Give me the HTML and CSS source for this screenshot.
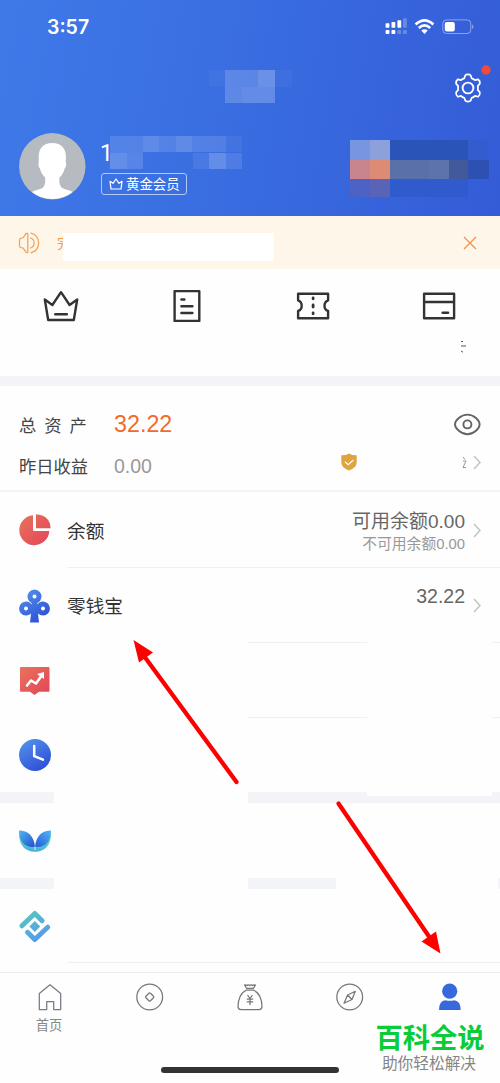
FILE: index.html
```html
<!DOCTYPE html>
<html lang="zh-CN">
<head>
<meta charset="utf-8">
<title>我的</title>
<link rel="stylesheet" href="styles.css">
</head>
<body>
<div class="phone">
  <header class="header">
    <div class="status">
      <span class="time">3:57</span>
      <svg class="status-icons" width="92" height="20" viewBox="0 0 92 20" fill="#fff">
        <rect x="2.600" y="7.300" width="3.800" height="4.500" rx=".7"/><rect x="8.500" y="6" width="3.800" height="5.800" rx=".7"/><rect x="14.400" y="4.300" width="3.800" height="7.500" rx=".7"/><rect x="20" y="2.300" width="3.800" height="9.500" rx=".7" opacity=".25"/>
        <rect x="2.600" y="14" width="3.800" height="4" rx=".8"/><rect x="8.500" y="14" width="3.800" height="4" rx=".8"/><rect x="14.400" y="14" width="3.800" height="4" rx=".8" opacity=".25"/><rect x="20" y="14" width="3.800" height="4" rx=".8" opacity=".25"/>
        <g transform="translate(0 -.8)"><g fill="none" stroke="#fff" stroke-width="2.700"><path d="M32.600 9.300Q41.500 .9 50.400 9.300"/><path d="M35.800 12.700Q41.500 7.600 47.200 12.700"/></g><path d="M38.300 15.300Q41.500 12.900 44.700 15.300L41.500 18.900Z"/></g>
        <g transform="translate(0 -.8)"><rect x="59.800" y="4.700" width="28" height="13.600" rx="3.700" fill="none" stroke="#fff" opacity=".42"/><rect x="61.800" y="6.700" width="10" height="9.700" rx="2"/><path d="M89.200 9q2.400 2.500 0 5z" opacity=".5"/></g>
      </svg>
    </div>
    <div class="titlebar">
      <svg class="title-mosaic" width="83" height="34" viewBox="0 0 83 34" fill="#fff" shape-rendering="crispEdges"><path d="M0 0h16v16H0z" opacity=".04"/><path d="M16 0h17v17H16z" opacity=".18"/><path d="M33 0h16v17H33z" opacity=".18"/><path d="M49 0h17v17H49z" opacity=".25"/><path d="M66 0h17v17H66z" opacity=".03"/><path d="M16 17h17v16H16z" opacity=".19"/><path d="M33 17h33v16H33z" opacity=".22"/></svg>
      <svg class="gear" width="40" height="40" viewBox="0 0 40 40"><g fill="none" stroke="#fff" stroke-width="1.900" stroke-linejoin="round"><path transform="translate(1.500 1.500) scale(.915 .93)" d="M15 7.500C16 6 20 6 21 7.500L22 10.500Q24.200 11 25.700 12.600L29 11.600C30.600 12.700 31.200 14.400 31 16.300L28.700 19Q29.200 21 28.700 23L31 25.700C31.200 27.600 30.600 29.300 29 30.400L25.700 29.400Q24.200 31 22 31.500L21 34.500C20 36 16 36 15 34.500L14 31.500Q11.800 31 10.300 29.400L7 30.400C5.400 29.300 4.800 27.600 5 25.700L7.300 23Q6.800 21 7.300 19L5 16.300C4.800 14.400 5.400 12.700 7 11.600L10.300 12.600Q11.800 11 14 10.500Z"/><circle cx="18" cy="21" r="5.400"/></g><circle cx="36" cy="3" r="4.700" fill="#ef4a3c"/></svg>
    </div>
    <div class="profile">
      <svg class="avatar" width="67" height="67" viewBox="0 0 67 67"><circle cx="33.300" cy="33.300" r="33.200" fill="#b6bbc1"/><path d="M33.300 10C24 10 19.500 16 19.700 24c0 1.800.2 4-.1 6-.6 1.500.1 4.200 1.200 5.200 1 3.700 2.800 7 5.400 9.300.3 4.700-.2 8.800-3.200 10.800-3 2-7 1.500-10 3.800a33 33 0 0 0 40.600 0c-3-2.300-7-1.800-10-3.800-3-2-3.500-6.100-3.200-10.800 2.600-2.300 4.400-5.600 5.400-9.300 1.100-1 1.800-3.700 1.200-5.200-.3-2-.1-4.200-.1-6C47.100 16 42.600 10 33.300 10Z" fill="#fff"/></svg>
      <div class="identity">
        <div class="name"><span>1</span><svg width="133" height="33" viewBox="0 0 133 33" fill="#fff" shape-rendering="crispEdges"><path d="M0 0h33v17H0z" opacity=".12"/><path d="M33 0h16v16H33z" opacity=".18"/><path d="M49 0h17v16H49z" opacity=".13"/><path d="M66 0h16v16H66z" opacity=".19"/><path d="M82 0h34v16H82z" opacity=".13"/><path d="M116 0h16v16h-16z" opacity=".05"/><path d="M0 17h17v16H0z" opacity=".2"/><path d="M17 17h16v16H17z" opacity=".14"/><path d="M83 17h16v16H83z" opacity=".08"/><path d="M99 17h17v16H99z" opacity=".22"/><path d="M116 17h16v16h-16z" opacity=".11"/></svg></div>
        <div class="badge"><svg width="14" height="12" viewBox="0 0 14 12" fill="none" stroke="#fff" stroke-width="1.200" stroke-linejoin="round" stroke-linecap="round"><path d="M1 3.300l3 2L7 1l3 4.300 3-2-1 7.700H2z"/></svg><span>黄金会员</span></div>
      </div>
      <svg class="card-mosaic" width="139" height="57" viewBox="0 0 139 57" shape-rendering="crispEdges"><path fill="#7895e2" d="M0 0h20v20H0z"/><path fill="#8ca1dc" d="M20 0h20v20H20z"/><path fill="#2b54b9" d="M40 0h78v20H40z"/><path fill="#335dcf" d="M118 0h20v20h-20z"/><path fill="#c8858d" d="M0 20h20v19H0z"/><path fill="#dd8b75" d="M20 20h20v19H20z"/><path fill="#5971a8" d="M40 20h39v19H40z"/><path fill="#5d74ab" d="M79 20h20v19H79z"/><path fill="#42599b" d="M99 20h19v19H99z"/><path fill="#2c51b2" d="M118 20h21v19h-21z"/><path fill="#4c62c5" d="M0 39h20v18H0z"/><path fill="#5963b8" d="M20 39h20v18H20z"/><path fill="#305bcc" d="M40 39h78v18H40z"/></svg>
    </div>
  </header>

  <div class="notice">
    <svg width="22" height="22" viewBox="0 0 22 22" fill="none" stroke="#f0a45d" stroke-width="1.300" stroke-linecap="round" stroke-linejoin="round"><path d="M9.800 20V2.300Q9.600 1 8.200 1.400L5.400 5.400Q4.800 6.200 3.300 6.200Q1.500 6.300 1.500 8.300v5.200q0 2 1.800 2.100 1.500 0 2.100.8l2.800 4q1.400.8 1.600-.4M12.500 6q3.600 1.200 3.600 5t-3.600 5M13 1.200q7.600 2.200 7.600 9.800T13 20.800"/></svg>
    <span class="notice-text">完</span>
    <span class="notice-cover"></span>
    <svg class="close" width="14" height="14" viewBox="0 0 14 14" stroke="#f0944c" stroke-width="1.300"><path d="M1 1l12 12M13 1L1 13"/></svg>
  </div>

  <nav class="quick">
    <svg width="38" height="36" viewBox="0 0 38 36"><path d="M2.800 12.500L10.400 18 19 5.200 27.600 18 35.200 12.500 31.800 33H6.200Z"/><path d="M13.300 27.300h11.500"/></svg>
    <svg width="38" height="36" viewBox="0 0 38 36"><path d="M6.600 4.100h24.700v29.800H6.600z"/><path d="M13.400 12.500h3M13.400 19.200h11M13.400 26h11"/></svg>
    <svg width="38" height="36" viewBox="0 0 38 36"><path d="M4.100 6.800h30v6.500C29.300 15 29.300 22.500 34.100 24v7.200h-30V24C8.900 22.500 8.900 15 4.100 13.300z"/><path d="M19.100 11v.8M19.100 18v2M19.100 26v.8" stroke-width="2.800"/></svg>
    <svg width="38" height="36" viewBox="0 0 38 36"><path d="M4.100 6.800h30v24.500h-30zM4.100 15h30"/><path d="M22.600 25.700h5.500"/></svg>
  </nav>
  <div class="quick-note"><svg width="7" height="14" viewBox="0 0 7 14" fill="none" stroke="#555"><path d="M1 1.500h2M1 6h5M1 11l2 1.200"/></svg></div>

  <div class="band band-top"></div>
  <section class="assets">
    <div class="asset-line total">
      <span class="label spaced">总资产</span><span class="amount">32.22</span>
      <svg class="eye" width="28" height="24" viewBox="0 0 28 24" fill="none" stroke="#646464" stroke-width="1.900"><path d="M2 12.400C2 8.500 8 2.600 14.500 2.600S26.600 8.500 26.600 12.400 21 22.200 14.500 22.200 2 16.300 2 12.400Z"/><circle cx="14.400" cy="12.400" r="4"/></svg>
    </div>
    <div class="asset-line income">
      <span class="label">昨日收益</span><span class="gain">0.00</span>
      <svg class="shield" width="16" height="18" viewBox="0 0 16 18"><path d="M8 .4Q10.500 2.300 15.700 2.300V9.500Q15.400 15 8 17.600.6 15 .3 9.500V2.300Q5.500 2.300 8 .4Z" fill="#dfa43d"/><path d="M4 8.700l3.200 3L12.300 7" fill="none" stroke="#fff" stroke-width="1.200"/></svg>
      <svg class="fragment" width="5" height="13" viewBox="0 0 5 13" fill="none" stroke="#999"><path d="M1 1l2 2.500M1 5h3L1 11.500h3"/></svg>
      <svg class="chevron" width="8" height="15" viewBox="0 0 8 15"><path d="M1 1l6 6.500-6 6.500"/></svg>
    </div>
  </section>

  <main class="list">
    <div class="row balance">
      <svg width="32" height="32" viewBox="0 0 32 32"><defs><linearGradient id="red" x2="1" y2="1"><stop stop-color="#e7745a"/><stop offset="1" stop-color="#e34459"/></linearGradient><linearGradient id="blue" x2=".6" y2="1"><stop stop-color="#5596ed"/><stop offset="1" stop-color="#2f52d7"/></linearGradient></defs><path fill="url(#red)" d="M14 1.200A15 15 0 1 0 30.300 17H15Q14 17 14 16ZM17 .2Q31 1.200 31.600 14.200H17Z"/></svg>
      <span class="row-title">余额</span>
      <div class="value"><span>可用余额0.00</span><small>不可用余额0.00</small></div>
      <svg class="chevron" width="8" height="15" viewBox="0 0 8 15"><path d="M1 1l6 6.500-6 6.500"/></svg>
    </div>
    <div class="row wallet">
      <svg width="32" height="34" viewBox="0 0 32 34"><path fill="url(#blue)" fill-rule="evenodd" d="M12 13.500A7 7 0 1 1 19 13.500Q18 14.500 18.200 15.500A7 7 0 1 1 19 24.500L20 33.500H11L12 24.500A7 7 0 1 1 12.800 15.500Q13 14.500 12 13.500ZM15.500 5.400a2 2 0 1 0 .01 0ZM7 17.500a2 2 0 1 0 .01 0ZM24 17.500a2 2 0 1 0 .01 0Z"/></svg>
      <span class="row-title">零钱宝</span>
      <div class="value single"><span>32.22</span></div>
      <svg class="chevron" width="8" height="15" viewBox="0 0 8 15"><path d="M1 1l6 6.500-6 6.500"/></svg>
    </div>
    <div class="row chart"><svg width="32" height="32" viewBox="0 0 32 32"><path fill="url(#red)" d="M2 2h27.500q1 0 1 1v22.700q0 1-1 1H20L15.500 30 11 26.700H2q-1 0-1-1V3q0-1 1-1z"/><path d="M8 20.500l4-5 5 3L23 10" fill="none" stroke="#fff" stroke-width="2.600" stroke-linecap="round" stroke-linejoin="round"/><path fill="#fff" d="M18 9l7-2v7z"/></svg></div>
    <div class="row clock"><svg width="32" height="32" viewBox="0 0 32 32"><circle cx="16" cy="16" r="16" fill="url(#blue)"/><path d="M15.200 7v10.200l8.800 3.500" fill="none" stroke="#fff" stroke-width="2.500" stroke-linecap="round" stroke-linejoin="round"/></svg></div>
    <div class="band"></div>
    <div class="row leaf"><svg width="32" height="22" viewBox="0 0 32 22"><defs><linearGradient id="leaf" x2="1" y2="1"><stop stop-color="#50b7f5"/><stop offset="1" stop-color="#204fcb"/></linearGradient><linearGradient id="leaf2" x1="1" x2="0" y2="1"><stop stop-color="#50b7f5"/><stop offset="1" stop-color="#2559d6"/></linearGradient><linearGradient id="cup" x2="0" y2="1"><stop stop-color="#76edaa"/><stop offset="1" stop-color="#47aae1"/></linearGradient></defs><path fill="url(#cup)" d="M0 4C0 15 6 21.800 16 21.800S32 15 32 4L16 17Z"/><path fill="url(#leaf)" d="M0 .5C9 .5 15 6 16 16.800 6 18 0 12 0 .5Z"/><path fill="url(#leaf2)" d="M32 .5C23 .5 17 6 16 16.800 26 18 32 12 32 .5Z"/><path fill="#cff6f4" d="M15.500 17h1v3h-1z"/></svg></div>
    <div class="band"></div>
    <div class="row diamond"><svg width="32" height="33" viewBox="0 0 32 33"><defs><linearGradient id="teal" gradientUnits="userSpaceOnUse" x1="6" y1="2" x2="22" y2="30"><stop stop-color="#5cc7bd"/><stop offset="1" stop-color="#539aed"/></linearGradient></defs><g fill="none" stroke="url(#teal)" stroke-width="5" stroke-linecap="round" stroke-linejoin="round"><path d="M2.900 15.800L15.800 3.500l7.300 7.200M28.700 17.200L15.800 29.500 8.500 22.300"/></g><path fill="url(#teal)" d="M15.800 11l5.400 5.500-5.400 5.500-5.400-5.500z"/></svg></div>
  </main>

  <footer class="tabs">
    <div class="tab"><svg width="28" height="28" viewBox="0 0 28 28"><path d="M3.300 10.500L14 1.800l10.700 8.700V26.500h-7v-8h-7v8H3.300z" stroke="#777985"/></svg><span>首页</span></div>
    <div class="tab"><svg width="28" height="28" viewBox="0 0 28 28"><circle cx="13.700" cy="14" r="12.900"/><path d="M12.900 10.200q.8-.8 1.600 0l3 3q.8.800 0 1.600l-3 3q-.8.800-1.600 0l-3-3q-.8-.800 0-1.600z"/></svg></div>
    <div class="tab"><svg width="28" height="28" viewBox="0 0 28 28"><path d="M8.500 2l2 3.300h7l2-3.300q-1.500-.5-2.700.5-1.300-1.500-2.800 0-1.500-1.500-2.800 0Q10 1.500 8.500 2zM9.500 7.200h9M10 7.500C5 9.500 2 16 2 23.500q0 3 3 3h18q3 0 3-3C26 16 23 9.500 18 7.500M11.500 12l2.500 3.500 2.500-3.500M10.800 16h6.400M10.800 18.800h6.400M14 15.500V22"/></svg></div>
    <div class="tab"><svg width="28" height="28" viewBox="0 0 28 28"><circle cx="13.700" cy="14" r="12.900"/><path d="M19.300 8.300l-3.300 8.200-8 3.700 3.600-8.200zM11.600 12l4.400 4.500"/></svg></div>
    <div class="tab active"><svg width="28" height="28" viewBox="0 0 28 28"><circle cx="13.700" cy="8.200" r="7.600"/><path d="M3 27q0-9.300 6.500-9.800 4.500 1.200 8.800 0Q24.700 18 24.700 27z"/></svg></div>
  </footer>

  <div class="cover cover-labels"></div>
  <div class="cover cover-values"></div>
  <div class="cover cover-lower"></div>
  <svg class="arrows" width="500" height="1083" viewBox="0 0 500 1083" fill="#f00" stroke="#f00" stroke-linecap="round"><path d="M236.500 782L144 656" stroke-width="4.300"/><path d="M133.500 640l19.500 12.500-14 10z" stroke="none"/><path d="M338.500 803.500L430 938" stroke-width="4.300"/><path d="M440.500 953.500l-19-12 14.500-10z" stroke="none"/></svg>
  <div class="home-indicator"></div>
  <div class="brand"><strong>百科全说</strong><span>助你轻松解决</span></div>
</div>
</body>
</html>
```
FILE: styles.css
```css
* { box-sizing: border-box; }
body { margin: 0; font-family: "Liberation Sans", "Noto Sans CJK SC", sans-serif; background: #fefefe; }
svg { display: block; flex: none; overflow: visible; }
.phone { position: relative; width: 500px; height: 1083px; overflow: hidden; background: #fefefe; }
.header { height: 216px; background: linear-gradient(100deg, #3f79e8 0%, #3a6fe2 40%, #345cd7 100%); color: #fff; }
.status { height: 67px; display: flex; justify-content: space-between; padding: 16px 25px 0 47px; }
.time { font: 600 19.5px/23px Inter, sans-serif; }
.status-icons { width: 92px; }
.titlebar { height: 66px; display: flex; padding: 3px 0 0 209px; }
.gear { margin-left: 158px; margin-top: -3px; }
.profile { display: flex; padding-left: 19px; }
.identity { margin: 3px 0 0 15px; width: 249px; }
.name { height: 33px; display: flex; align-items: center; font: 23px/33px Roboto, sans-serif; }
.name span { width: 9px; margin-left: -1px; margin-right: 1px; padding-top: 2px; }
.badge { width: 86px; height: 22px; margin-top: 4px; padding-left: 7px; display: flex; align-items: center; gap: 3px; border: 1px solid #b0c9f5; border-radius: 3px; font-size: 13.4px; line-height: 20px; white-space: nowrap; }
.badge span { padding-top: 1px; }
.card-mosaic { margin-top: 7px; }
.notice { height: 53px; display: flex; align-items: center; padding: 0 23px 0 18px; background: #fef6e9; }
.notice-text { width: 6px; margin-left: 17px; color: #ef9a50; font-size: 14px; line-height: 20px; }
.notice-cover { position: relative; width: 211px; height: 28px; margin-top: 9px; background: #fff; }
.close { margin-left: auto; }
.quick { height: 70px; display: flex; justify-content: space-between; padding: 18px 42px 0; }
.quick svg { fill: none; stroke: #333; stroke-width: 2.4; stroke-linecap: round; stroke-linejoin: round; }
.quick-note { height: 37px; padding: 1px 33px 0 0; display: flex; justify-content: flex-end; }
.band { height: 11px; background: #f3f4f8; }
.band-top { height: 10px; }
.assets { height: 106px; padding-top: 18px; border-bottom: 2px solid #f4f4f5; }
.asset-line { display: flex; align-items: center; padding: 0 19px; }
.total { height: 40px; }
.income { height: 42px; }
.label { width: 95px; padding-top: 3px; color: #444; font-size: 17.3px; line-height: 26px; white-space: nowrap; }
.spaced { letter-spacing: 8px; }
.amount { padding-top: 1px; color: #f26a2b; font-size: 23.3px; }
.eye { margin-left: auto; }
.gain { padding-top: 2px; color: #999; font-size: 19.5px; }
.shield { margin: -6px 0 0 189px; }
.fragment { margin: -5px 6px 0 auto; }
.chevron { fill: none; stroke: #c4c4c7; stroke-width: 1.5; }
.fragment + .chevron { margin-top: -6px; }
.row { height: 75px; padding: 0 19px; display: flex; align-items: center; background: linear-gradient(#f0f0f1, #f0f0f1) 67px 100% / 433px 1px no-repeat; }
.row-title { margin-left: 16px; padding-top: 3px; color: #333; font-size: 18.7px; line-height: 28px; }
.value { margin-left: auto; margin-right: 8px; padding-top: 2px; display: flex; flex-direction: column; align-items: flex-end; color: #666; font-size: 19px; line-height: 25px; }
.value small { color: #999; font-size: 14.8px; line-height: 20px; }
.balance { height: 76px; }
.single { padding: 0 0 19px; font-size: 19.5px; }
.wallet .row-title { padding-top: 2px; }
.clock { background: none; height: 74px; }
.leaf { background: none; height: 75px; }
.diamond { height: 74px; }
.tabs { height: 102px; margin-top: 9px; border-top: 1px solid #eee; display: flex; }
.tab { flex: 1; display: flex; flex-direction: column; align-items: center; padding-top: 10px; color: #888; font-size: 13.3px; line-height: 20px; }
.tab svg { fill: none; stroke: #777; stroke-width: 1.25; stroke-linejoin: round; }
.tab span { margin-top: 5px; margin-left: -2px; }
.tab.active svg { fill: #3769dc; stroke: none; }
.cover { position: absolute; background: #fefefe; }
.cover-labels { left: 54px; top: 630px; width: 194px; height: 330px; }
.cover-values { left: 367px; top: 628px; width: 125px; height: 168px; }
.cover-lower { left: 336px; top: 860px; width: 162px; height: 50px; }
.arrows { position: absolute; inset: 0; }
.home-indicator { position: absolute; left: 161px; top: 1067px; width: 178px; height: 6px; border-radius: 3px; background: #333; }
.brand { position: absolute; left: 370px; top: 1023px; width: 120px; display: flex; flex-direction: column; align-items: center; color: #858585; font-size: 15.7px; line-height: 20px; white-space: nowrap; }
.brand strong { color: #08cc38; font-size: 27.3px; line-height: 32px; }
.brand span { margin: -1px 0 0 -2px; }
```
